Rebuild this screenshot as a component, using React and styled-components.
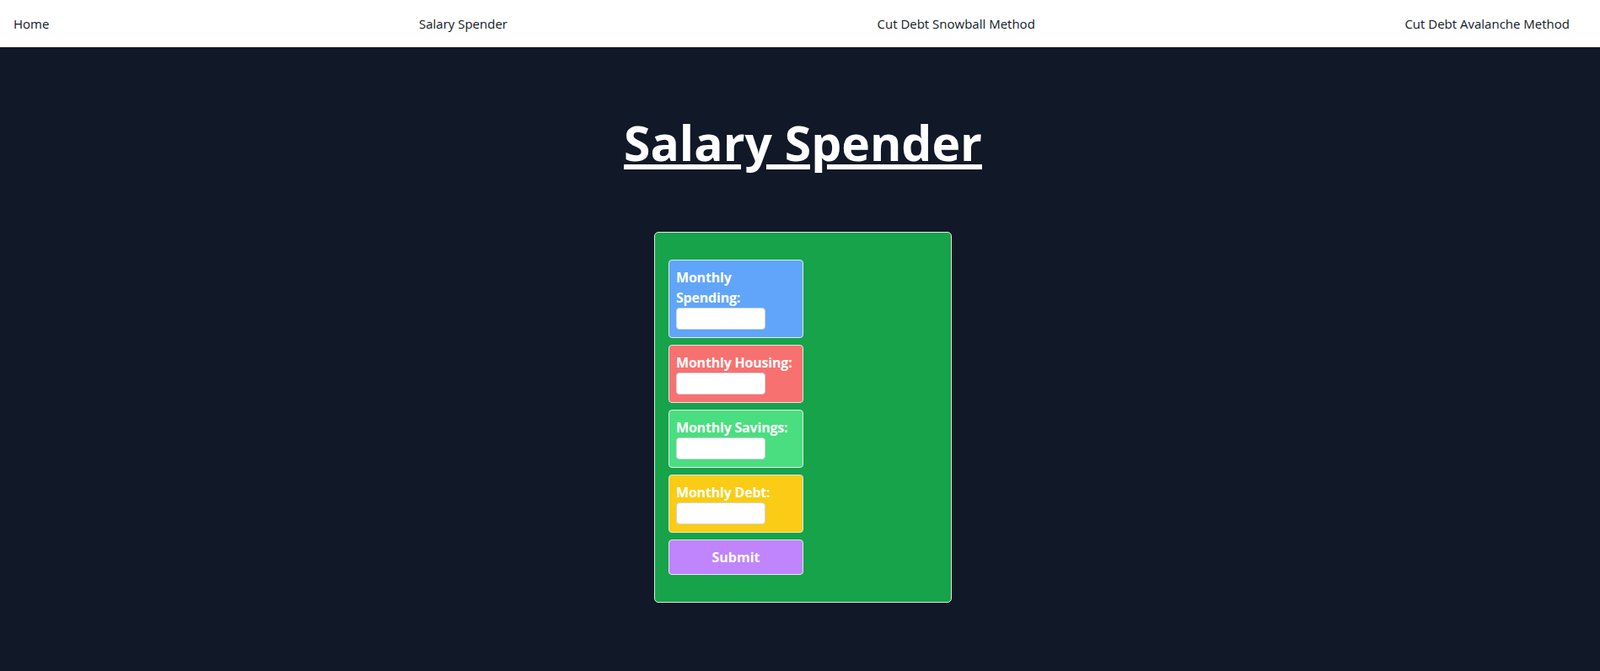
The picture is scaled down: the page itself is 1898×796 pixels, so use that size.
import React from 'react';
import styled, { createGlobalStyle } from 'styled-components';

const GlobalStyle = createGlobalStyle`
  * {
    box-sizing: border-box;
  }
  body {
    margin: 0;
    background: #111827;
    font-family: "Open Sans", "Noto Sans", sans-serif;
  }
`;

const Nav = styled.nav`
  display: flex;
  justify-content: space-between;
  align-items: center;
  height: 56px;
  padding: 0 36px 0 16px;
  background: #ffffff;
`;

const NavLink = styled.a`
  color: #111827;
  font-size: 15px;
  text-decoration: none;
`;

const Main = styled.main`
  display: flex;
  flex-direction: column;
  align-items: center;
  padding: 85px 0 0 7px;
  min-height: 740px;
`;

const Title = styled.h1`
  margin: 0;
  color: #ffffff;
  font-size: 57px;
  font-weight: 700;
  line-height: 1;
  text-decoration: underline;
  text-decoration-thickness: 6px;
  text-underline-offset: 4px;
`;

const Card = styled.form`
  display: flex;
  flex-direction: column;
  gap: 8px;
  width: 353px;
  margin-top: 77px;
  padding: 32px 16px;
  background: #16a34a;
  border: 1px solid #e5e7eb;
  border-radius: 5px;
`;

const Field = styled.div`
  width: 160px;
  padding: 8px 8px 9px;
  background: ${(p) => p.color};
  border: 1px solid #e5e7eb;
  border-radius: 4px;
`;

const Label = styled.label`
  display: block;
  color: #ffffff;
  font-size: 16px;
  font-weight: 700;
  line-height: 24px;
  letter-spacing: -0.2px;
`;

const Input = styled.input`
  display: block;
  width: 106px;
  height: 26px;
  margin: 0;
  padding: 0 6px;
  background: #ffffff;
  border: 1px solid #d1d5db;
  border-radius: 4px;
`;

const SubmitButton = styled.button`
  width: 160px;
  height: 42px;
  padding: 0;
  background: #c084fc;
  color: #ffffff;
  font-family: inherit;
  font-size: 16px;
  font-weight: 700;
  border: 1px solid #e5e7eb;
  border-radius: 4px;
  cursor: pointer;
`;

const fields = [
  { id: 'spending', label: 'Monthly Spending:', color: '#60a5fa' },
  { id: 'housing', label: 'Monthly Housing:', color: '#f87171' },
  { id: 'savings', label: 'Monthly Savings:', color: '#4ade80' },
  { id: 'debt', label: 'Monthly Debt:', color: '#facc15' },
];

export default function App() {
  return (
    <>
      <GlobalStyle />
      <Nav>
        <NavLink href="#">Home</NavLink>
        <NavLink href="#">Salary Spender</NavLink>
        <NavLink href="#">Cut Debt Snowball Method</NavLink>
        <NavLink href="#">Cut Debt Avalanche Method</NavLink>
      </Nav>
      <Main>
        <Title>Salary Spender</Title>
        <Card onSubmit={(e) => e.preventDefault()}>
          {fields.map((f) => (
            <Field key={f.id} color={f.color}>
              <Label htmlFor={f.id}>{f.label}</Label>
              <Input id={f.id} type="text" />
            </Field>
          ))}
          <SubmitButton type="submit">Submit</SubmitButton>
        </Card>
      </Main>
    </>
  );
}
